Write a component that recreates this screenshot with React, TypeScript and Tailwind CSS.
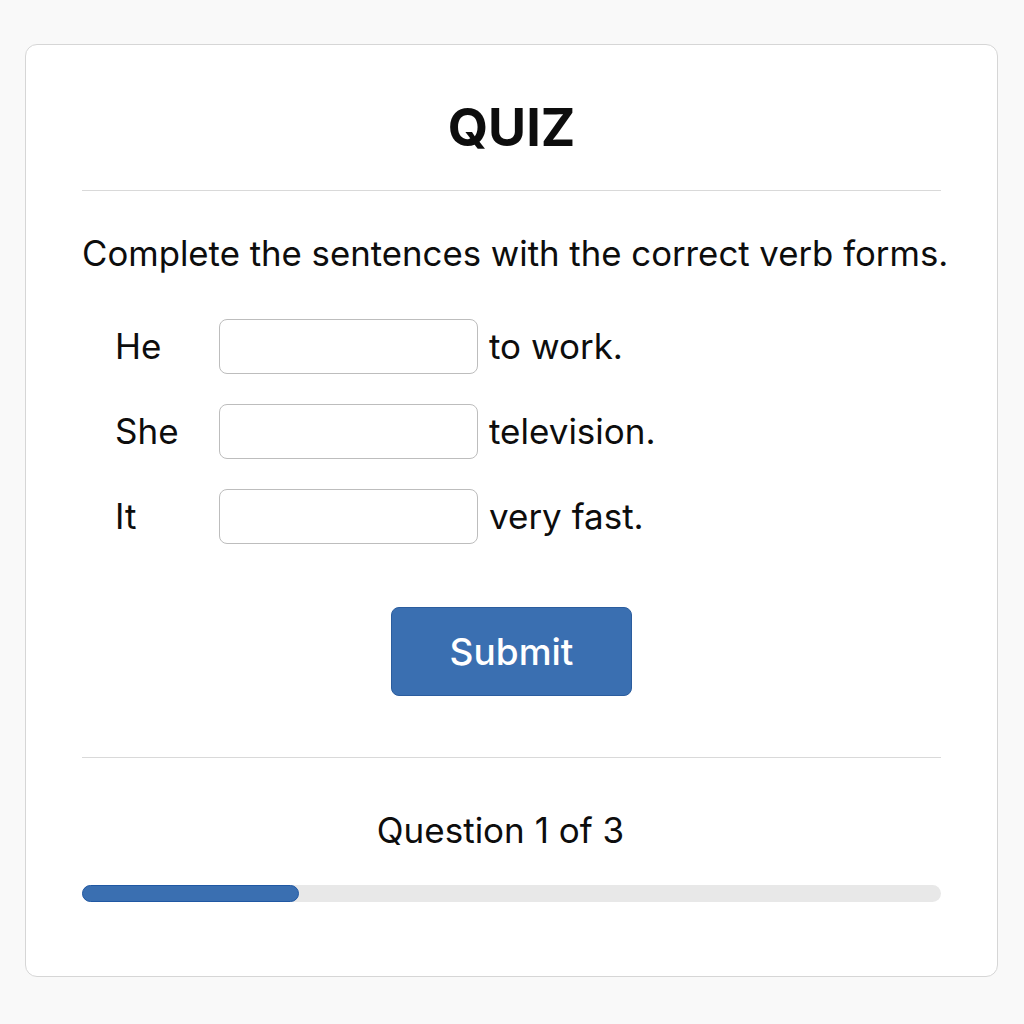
import React from "react";

const rows = [
  { subject: "He", rest: "to work." },
  { subject: "She", rest: "television." },
  { subject: "It", rest: "very fast." },
];

export default function App() {
  return (
    <div
      className="min-h-screen w-full bg-[#f9f9f9] pt-[44px] pl-[25px]"
      style={{ fontFamily: "Inter, 'Noto Sans', sans-serif" }}
    >
      <div className="flex h-[933px] w-[973px] flex-col rounded-[12px] border border-[#d6d6d6] bg-white px-[56px] text-[#0d0d0d]">
        <h1 className="mt-[57px] text-center text-[52px] font-bold leading-none">QUIZ</h1>
        <div className="mt-[36px] h-px w-full bg-[#d9d9d9]" />

        <p className="mt-[45px] whitespace-nowrap text-[34.75px] leading-none">
          Complete the sentences with the correct verb forms.
        </p>

        <div className="mt-[48px] flex flex-col gap-[30px] pl-[33px]">
          {rows.map((row) => (
            <div key={row.subject} className="flex h-[55px] items-center">
              <span className="w-[104px] text-[35px] leading-none">{row.subject}</span>
              <input
                type="text"
                className="h-[55px] w-[259px] rounded-[8px] border border-[#bdbdbd] bg-white px-3 text-[28px] outline-none"
              />
              <span className="ml-[11px] text-[35px] leading-none">{row.rest}</span>
            </div>
          ))}
        </div>

        <div className="mt-[63px] flex justify-center">
          <button className="h-[89px] w-[241px] rounded-[8px] border border-[#2b5d9e] bg-[#3a6fb1] text-[37px] font-medium text-white">
            Submit
          </button>
        </div>

        <div className="mt-[61px] h-px w-full bg-[#d9d9d9]" />

        <p className="mt-[55px] pr-[22px] text-center text-[35px] leading-none">Question 1 of 3</p>

        <div className="mt-[37px] h-[17px] w-full rounded-full bg-[#e8e8e8]">
          <div className="h-full w-[217px] rounded-full border border-[#2058a3] bg-[#3a6fb1]" />
        </div>
      </div>
    </div>
  );
}
